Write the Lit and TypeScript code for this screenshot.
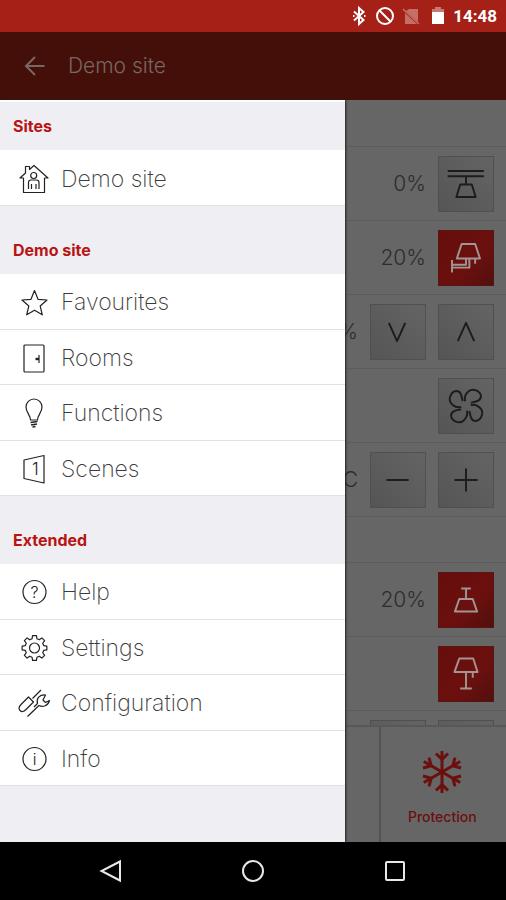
import { LitElement, html, css, svg, nothing, SVGTemplateResult } from "lit";
import { customElement, property } from "lit/decorators.js";

const gearPath = (() => {
  const pts: string[] = [];
  const teeth = 8;
  for (let i = 0; i < teeth; i++) {
    const a = (i * 360) / teeth - 90;
    for (const [off, r] of [[-15, 9.5], [-9, 12.5], [9, 12.5], [15, 9.5]]) {
      const t = ((a + off) * Math.PI) / 180;
      pts.push(`${(15.5 + r * Math.cos(t)).toFixed(2)} ${(15 + r * Math.sin(t)).toFixed(2)}`);
    }
  }
  return "M" + pts.join("L") + "Z";
})();

const petal = "M-1 -5C-2 -9 0 -13 3 -15.500C7 -18.500 15 -16 15.500 -10C15.500 -5 10 -4.500 5 -3.500";

/* Menu icons use a 30-unit box, device icons a 56-unit box. */
const ICONS: Record<string, SVGTemplateResult> = {
  house: svg`<path d="M15 1.500L29 14H25.500V28.500H4.500V14H1L6.500 9V2.500H10.500V5.500Z"/>
    <circle cx="14.700" cy="11.500" r="3"/>
    <path d="M9.500 25V18.500Q9.500 16 12 16H17.500Q20 16 20 18.500V25M12.500 25V20M17 25V20"/>`,
  star: svg`<path d="M15.500 3.500L19 12.300L28 13L21.200 19L23.300 27.800L15.500 23.200L7.700 27.800L9.800 19L3 13L12 12.300Z"/>`,
  door: svg`<rect x="5" y="2" width="20" height="27" rx="1"/><path d="M20 12V20"/><path d="M16.500 16H20" stroke-width="2.400"/>`,
  bulb: svg`<path d="M11.500 22C11.500 17 7 14.500 7 9A8 8 0 0 1 23 9C23 14.500 18.500 17 18.500 22Z"/>
    <path d="M11.500 24.500L18.500 23.500M12 27L18 26M13.500 29L16.500 28.500" stroke-width="1.600"/>`,
  scene: svg`<path d="M5 6L25 1.500V29L5 24.500Z"/><text x="13" y="21" font-size="17">1</text>`,
  help: svg`<circle cx="15.500" cy="15" r="11.500"/><text x="15.500" y="20.500" font-size="16" text-anchor="middle">?</text>`,
  gear: svg`<path d=${gearPath}/><circle cx="15.500" cy="15" r="5"/>`,
  tools: svg`<path d="M22 2L13.500 10.500"/><path d="M9.500 9L14.500 14L7 21.500Q3.500 25 1 22.500T2.500 16Z"/>
    <path d="M8.500 28.500L20 17.500C24 19.500 29 18 30.500 12.500L26.500 14.500L24 12L26.500 7C20.500 6.500 17 10.500 18.500 15.500L15 19"/>`,
  info: svg`<circle cx="15.500" cy="15" r="11.500"/><text x="15.500" y="20.500" font-size="16" text-anchor="middle">i</text>`,
  ceiling: svg`<path d="M9 14.500H46.500M9 20H46.500M28 20V28.500M22 28.500H34L38 41.500H18Z"/>`,
  wall: svg`<path d="M23.500 13.500H37.500L42.500 28.500H18.500ZM37.500 28.500V34M31.500 28.500V38H13.500M28 28.500V35H13.500M13.500 30V43"/>`,
  down: svg`<path d="M18.500 18.500L27 37.500L35.500 18.500"/>`,
  up: svg`<path d="M19.500 37.500L28 18.500L36.500 37.500"/>`,
  fan: svg`${[0, 90, 180, 270].map((a) => svg`<path d=${petal} transform="translate(28 28) rotate(${a})"/>`)}`,
  minus: svg`<path d="M16 28H39"/>`,
  plus: svg`<path d="M16 28H40M28 16V40"/>`,
  pendant: svg`<path d="M23 16H33M28 16V27M21 27H35L39.500 40H16.500Z"/>`,
  table: svg`<path d="M21 12H35.500L40 26H16ZM28 26V43M22 43H34M35 26V32"/>`,
  snow: svg`${[0, 60, 120, 180, 240, 300].map(
    (a) => svg`<path d="M0 0V-21M-6 -18.500L0 -12.500L6 -18.500" transform="translate(28 28) rotate(${a})"/>`
  )}`,
};

@customElement("app-icon")
export class AppIcon extends LitElement {
  @property() name = "";
  @property({ type: Number }) box = 30;

  static styles = css`
    :host { display: block; }
    svg {
      display: block;
      width: 100%;
      height: 100%;
      overflow: visible;
      fill: none;
      stroke: currentColor;
      stroke-width: var(--stroke, 1.2);
      stroke-linejoin: round;
    }
    text { fill: currentColor; stroke: none; font-family: Inter, sans-serif; font-weight: 300; }
  `;

  render() {
    return html`<svg viewBox="0 0 ${this.box} ${this.box}" aria-hidden="true">${ICONS[this.name]}</svg>`;
  }
}

interface MenuGroup { title: string; items: [string, string][]; }
interface Control { icon: string; label: string; on?: boolean; }
interface Row { value?: string; controls: Control[]; }

const MENU: MenuGroup[] = [
  { title: "Sites", items: [["house", "Demo site"]] },
  {
    title: "Demo site",
    items: [["star", "Favourites"], ["door", "Rooms"], ["bulb", "Functions"], ["scene", "Scenes"]],
  },
  {
    title: "Extended",
    items: [["help", "Help"], ["gear", "Settings"], ["tools", "Configuration"], ["info", "Info"]],
  },
];

const ROOMS: Row[][] = [
  [
    { value: "0%", controls: [{ icon: "ceiling", label: "Ceiling light" }] },
    { value: "20%", controls: [{ icon: "wall", label: "Wall light", on: true }] },
    { value: "0%", controls: [{ icon: "down", label: "Lower" }, { icon: "up", label: "Raise" }] },
    { controls: [{ icon: "fan", label: "Fan" }] },
    { value: "°C", controls: [{ icon: "minus", label: "Cooler" }, { icon: "plus", label: "Warmer" }] },
  ],
  [
    { value: "20%", controls: [{ icon: "pendant", label: "Pendant", on: true }] },
    { controls: [{ icon: "table", label: "Table lamp", on: true }] },
    { controls: [{ icon: "down", label: "Lower" }, { icon: "up", label: "Raise" }] },
  ],
];

@customElement("app-root")
export class AppRoot extends LitElement {
  static styles = css`
    :host {
      display: flex;
      flex-direction: column;
      height: 100vh;
      background: #fff;
      color: #333;
      font-family: Inter, "Open Sans", sans-serif;
      font-weight: 200;
    }
    * { box-sizing: border-box; }
    button { margin: 0; padding: 0; border: 0; background: none; color: inherit; font: inherit; }
    a { color: inherit; text-decoration: none; }

    .status {
      flex: none;
      display: flex;
      align-items: center;
      justify-content: flex-end;
      height: 32px;
      padding-right: 9px;
      background: #a52117;
      color: #fff;
    }
    .status svg { display: block; width: 20px; height: 20px; margin-right: 6px; fill: none; stroke: #fff; stroke-width: 2; }
    .status .dim { opacity: 0.35; }
    .status time { font: 700 17px/20px Roboto, sans-serif; }

    .app { position: relative; flex: 1; min-height: 0; display: flex; flex-direction: column; overflow: hidden; }
    .bar {
      flex: none;
      display: flex;
      align-items: center;
      gap: 20px;
      height: 68px;
      padding-left: 22px;
      background: #450f09;
      color: #786762;
    }
    .bar svg { display: block; width: 26px; height: 26px; fill: none; stroke: currentColor; stroke-width: 2; }
    .bar h1 { margin: 0; font-size: 21px; line-height: 28px; font-weight: 300; }

    .body { position: relative; flex: 1; min-height: 0; display: flex; flex-direction: column; background: #666; color: #2c2c2c; }
    .rooms { flex: 1; min-height: 0; overflow: hidden; }
    .room { padding-top: 46px; }
    .row {
      display: flex;
      align-items: center;
      justify-content: flex-end;
      gap: 12px;
      height: 74px;
      padding-right: 12px;
      border-top: 1px solid #5c5c5c;
    }
    .room:last-child { border-top: 1px solid #5c5c5c; padding-top: 45px; }
    .value { font-size: 21px; line-height: 28px; font-weight: 300; }
    .control { width: 56px; height: 56px; border: 1px solid #505050; background: linear-gradient(45deg, #555, #646464); color: #1c1c1c; }
    .control app-icon { width: 54px; height: 54px; --stroke: 2; }
    .control.on { border-color: #5a1512; background: linear-gradient(135deg, #650e0c, #6b100f 60%, #50100d); color: #a29593; }

    .tiles { flex: none; display: grid; grid-template-columns: repeat(4, 1fr); height: 117px; border-top: 2px solid #585858; }
    .tile {
      grid-column: 4;
      display: flex;
      flex-direction: column;
      align-items: center;
      gap: 7px;
      margin-left: -1px;
      padding: 17px 2px 0 0;
      border-left: 2px solid #525252;
      color: #6b100e;
      font-size: 14px;
      line-height: 20px;
      font-weight: 500;
    }
    .tile app-icon { width: 56px; height: 56px; --stroke: 3; }

    .drawer {
      position: absolute;
      inset: 0 auto 0 0;
      width: 68.2%;
      overflow: hidden;
      border-top: 2px solid #fff;
      background: #efeef3;
      box-shadow: 1px 0 2px #222;
      color: #3c3c3c;
    }
    .title {
      display: flex;
      align-items: flex-end;
      height: 68px;
      margin: 0;
      padding: 0 13px 14px;
      color: #b81413;
      font-size: 16px;
      line-height: 20px;
      font-weight: 700;
    }
    .group:first-child .title { height: 48px; }
    .items {
      display: grid;
      grid-auto-rows: 1fr;
      height: 222px;
      margin: 0;
      padding: 0;
      list-style: none;
      background: #fff;
    }
    .group:first-child .items { height: 56px; }
    .items li { display: grid; border-bottom: 1px solid #e2e2e4; }
    .items a { display: flex; align-items: center; gap: 12px; padding: 2px 0 0 19px; font-size: 23px; line-height: 28px; }
    .items app-icon { width: 30px; height: 30px; color: #222; }

    .nav { flex: none; display: grid; grid-template-columns: repeat(3, 28%); justify-content: center; height: 58px; background: #000; }
    .nav button { display: grid; place-items: center; }
    .nav svg { width: 24px; height: 24px; fill: none; stroke: #e8e8e8; stroke-width: 2; }
  `;

  private renderRow(row: Row) {
    return html`<div class="row">
      ${row.value ? html`<span class="value">${row.value}</span>` : nothing}
      ${row.controls.map(
        (c) => html`<button class="control ${c.on ? "on" : ""}" aria-label=${c.label}>
          <app-icon name=${c.icon} box="56"></app-icon>
        </button>`
      )}
    </div>`;
  }

  render() {
    return html`
      <div class="status">
        <svg viewBox="0 0 20 20"><path d="M5 5.500L14.500 14L10 18V2L14.500 6L5 14.500"/><path d="M4 10H5.500M15 10H16.500"/></svg>
        <svg viewBox="0 0 20 20"><circle cx="10" cy="10" r="8"/><path d="M4.500 4.500L15.500 15.500"/></svg>
        <svg class="dim" viewBox="0 0 20 20"><path d="M8 3H17V16L5 5Z" fill="#fff" stroke="none"/><path d="M4 7L16 18H4Z" fill="#fff" stroke="none"/><path d="M2 3L18 18" stroke-width="1.500"/></svg>
        <svg viewBox="0 0 20 20"><path d="M8 1H14V3H17V7H5V3H8Z" fill="#fff" fill-opacity=".4" stroke="none"/><path d="M5 6H17V18H5Z" fill="#fff" stroke="none"/></svg>
        <time>14:48</time>
      </div>
      <div class="app">
        <header class="bar">
          <button aria-label="Back"><svg viewBox="0 0 26 26"><path d="M22.500 13H4M13 4L4 13L13 22"/></svg></button>
          <h1>Demo site</h1>
        </header>
        <div class="body">
          <main class="rooms">
            ${ROOMS.map((r) => html`<section class="room">${r.map((row) => this.renderRow(row))}</section>`)}
          </main>
          <div class="tiles">
            <button class="tile"><app-icon name="snow" box="56"></app-icon>Protection</button>
          </div>
          <nav class="drawer">
            ${MENU.map(
              (g) => html`<section class="group">
                <h2 class="title">${g.title}</h2>
                <ul class="items">
                  ${g.items.map(([icon, text]) => html`<li><a href="#"><app-icon name=${icon}></app-icon>${text}</a></li>`)}
                </ul>
              </section>`
            )}
          </nav>
        </div>
      </div>
      <footer class="nav">
        <button aria-label="Back"><svg viewBox="0 0 24 24"><path d="M21 2.500V21.500L2.500 12Z"/></svg></button>
        <button aria-label="Home"><svg viewBox="0 0 24 24"><circle cx="12" cy="12" r="10"/></svg></button>
        <button aria-label="Recent apps"><svg viewBox="0 0 24 24"><rect x="3" y="3" width="18" height="18" rx="1"/></svg></button>
      </footer>
    `;
  }
}
